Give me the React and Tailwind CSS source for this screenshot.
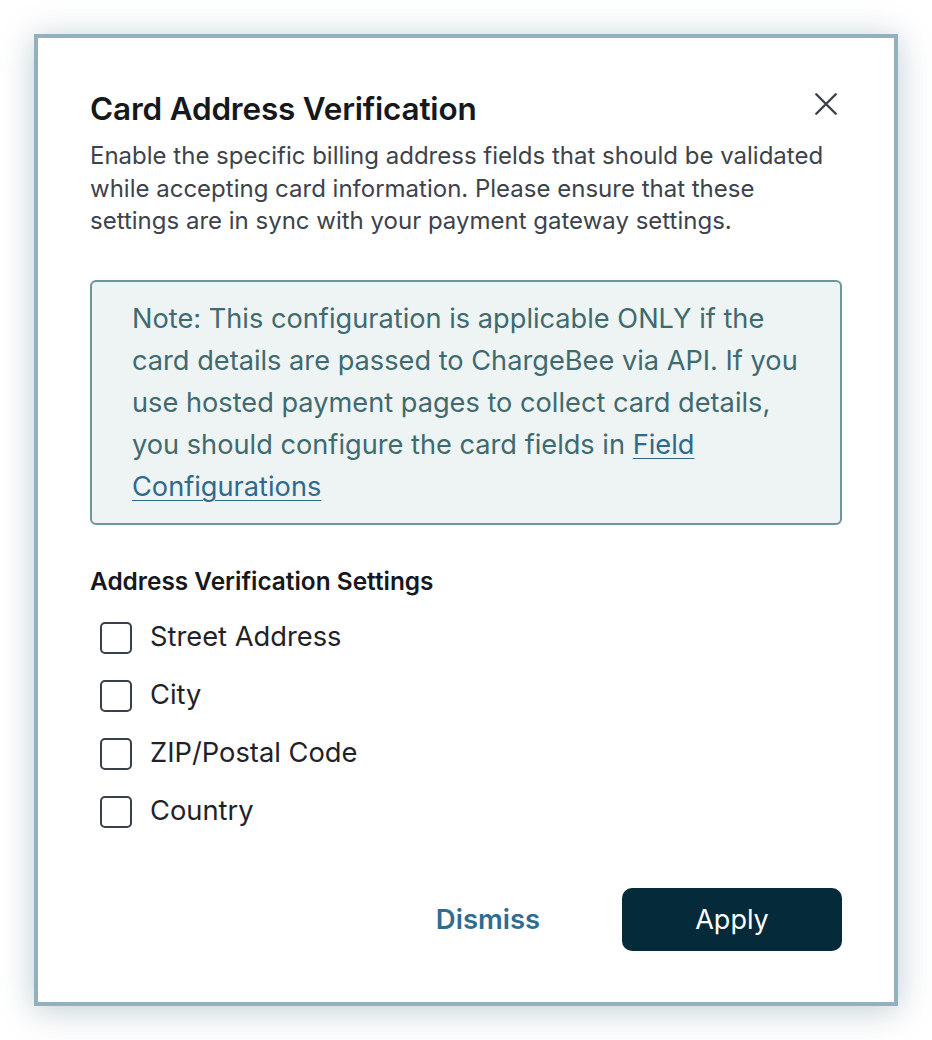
import React, { useState } from 'react'

const fields = ['Street Address', 'City', 'ZIP/Postal Code', 'Country']

export default function App() {
  const [checked, setChecked] = useState({})

  return (
    <div className="min-h-screen bg-white pt-[34px] pl-[34px]" style={{ fontFamily: 'Inter, "Noto Sans", sans-serif' }}>
      <div className="w-[864px] h-[972px] border-4 border-[#94b0bf] bg-white shadow-[0_4px_32px_rgba(70,110,130,0.35)] px-[52px] pt-[52px] flex flex-col">
        {/* Cabecera */}
        <div className="flex items-start justify-between">
          <h1 className="text-[31.5px] leading-[38px] font-semibold text-[#16181b] tracking-[-0.2px]">Card Address Verification</h1>
          <button className="mt-[1px] mr-[3px] text-[#3a4048]" aria-label="Cerrar">
            <svg width="26" height="26" viewBox="0 0 24 24" fill="none" stroke="currentColor" strokeWidth="2.2" strokeLinecap="round">
              <path d="M3 3l18 18M21 3L3 21" />
            </svg>
          </button>
        </div>
        <p className="mt-[12px] text-[24px] leading-[32.5px] text-[#3d434a]">
          Enable the specific billing address fields that should be validated while accepting card information. Please ensure that these settings are in sync with your payment gateway settings.
        </p>

        {/* Nota */}
        <div className="mt-[42px] rounded-[6px] border-2 border-[#6d969a] bg-[#eef3f4] pl-[40px] pr-[30px] pt-[16px] pb-[15px] text-[27.2px] leading-[42px] text-[#3f6a6e]">
          Note: This configuration is applicable ONLY if the card details are passed to ChargeBee via API. If you use hosted payment pages to collect card details, you should configure the card fields in{' '}
          <a href="#" className="text-[#2f6a8c] underline underline-offset-4 decoration-1">Field Configurations</a>
        </div>

        <h2 className="mt-[41px] text-[24.4px] leading-[30px] font-semibold text-[#16181b]">Address Verification Settings</h2>
        <div className="mt-[13px] flex flex-col">
          {fields.map(f => (
            <label key={f} className="h-[58px] flex items-center gap-[18px] pl-[10px] cursor-pointer">
              <input
                type="checkbox"
                className="sr-only"
                checked={!!checked[f]}
                onChange={() => setChecked(c => ({ ...c, [f]: !c[f] }))}
              />
              <span className={`w-[32px] h-[32px] rounded-[5px] border-2 border-[#3a4048] flex items-center justify-center ${checked[f] ? 'bg-[#052a3a]' : 'bg-white'}`}>
                {checked[f] && (
                  <svg width="18" height="18" viewBox="0 0 24 24" fill="none" stroke="white" strokeWidth="3"><path d="M4 12l5 5L20 6" /></svg>
                )}
              </span>
              <span className="text-[27.3px] text-[#1f2328]">{f}</span>
            </label>
          ))}
        </div>

        {/* Botones */}
        <div className="mt-[47px] flex justify-end gap-[24px]">
          <button className="w-[220px] h-[63px] pt-[2px] text-[27.5px] font-semibold text-[#2f6d90]">Dismiss</button>
          <button className="w-[220px] h-[63px] pt-[2px] rounded-[10px] bg-[#052a3a] text-white text-[27px]">Apply</button>
        </div>
      </div>
    </div>
  )
}
